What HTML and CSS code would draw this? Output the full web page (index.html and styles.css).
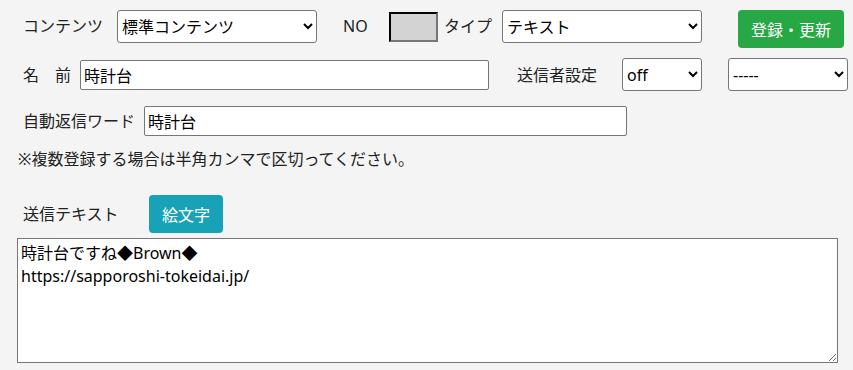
FILE: index.html
```html
<!DOCTYPE html>
<html lang="ja">
<head>
    <meta charset="UTF-8">
    <meta name="viewport" content="width=device-width, initial-scale=1.0">
    <title>コンテンツ編集</title>
    <link rel="stylesheet" href="styles.css">
</head>
<body>
    <form class="edit-form">
        <div class="form-row row-top">
            <label class="form-label label-contents">コンテンツ</label>
            <select class="form-select select-contents">
                <option>標準コンテンツ</option>
            </select>
            <span class="form-label label-no">NO</span>
            <input type="text" class="no-box" disabled>
            <label class="form-label label-type">タイプ</label>
            <select class="form-select select-type">
                <option>テキスト</option>
            </select>
            <button type="button" class="btn btn-save">登録・更新</button>
        </div>

        <div class="form-row row-name">
            <label class="form-label label-name">名　前</label>
            <input type="text" class="form-input input-name" value="時計台">
            <label class="form-label label-sender">送信者設定</label>
            <select class="form-select select-off">
                <option>off</option>
            </select>
            <select class="form-select select-sender">
                <option>-----</option>
            </select>
        </div>

        <div class="form-row row-word">
            <label class="form-label label-word">自動返信ワード</label>
            <input type="text" class="form-input input-word" value="時計台">
        </div>

        <p class="note">※複数登録する場合は半角カンマで区切ってください。</p>

        <div class="form-row row-text">
            <label class="form-label label-text">送信テキスト</label>
            <button type="button" class="btn btn-emoji">絵文字</button>
        </div>

        <textarea class="send-text">時計台ですね◆Brown◆
https://sapporoshi-tokeidai.jp/</textarea>
    </form>
</body>
</html>
```

FILE: styles.css
```css
body {
    margin: 0;
    background: #f4f4f4;
    font-family: "Noto Sans", "Noto Sans CJK JP", sans-serif;
    font-size: 16px;
    color: #222;
}
.edit-form {
    padding: 10px 0 0 0;
    width: 853px;
}
.form-row {
    display: flex;
    align-items: center;
}
.form-label {
    white-space: nowrap;
    line-height: 20px;
}
.form-select {
    font-family: "Noto Sans", "Noto Sans CJK JP", sans-serif;
    font-size: 16px;
    color: #000;
    background: #fff;
    border: 1px solid #767676;
    border-radius: 3px;
    height: 33px;
    padding: 0;
    box-sizing: border-box;
}
.form-input {
    font-family: "Noto Sans", "Noto Sans CJK JP", sans-serif;
    font-size: 16px;
    color: #000;
    background: #fff;
    border: 1px solid #767676;
    border-radius: 2px;
    height: 30px;
    padding: 0 3px;
    box-sizing: border-box;
}
.btn {
    font-family: "Noto Sans", "Noto Sans CJK JP", sans-serif;
    font-size: 16px;
    color: #fff;
    border: none;
    border-radius: 4px;
    cursor: pointer;
    padding: 0;
}

/* row 1 */
.row-top {
    align-items: flex-start;
    height: 48px;
}
.row-top .form-label {
    line-height: 33px;
}
.label-contents {
    margin-left: 23px;
    width: 94px;
}
.select-contents {
    width: 200px;
}
.label-no {
    margin-left: 26px;
    width: 46px;
}
.no-box {
    width: 49px;
    height: 30px;
    margin-top: 2px;
    box-sizing: border-box;
    border: 2px inset #767676;
    border-top-color: #222;
    border-left-color: #222;
    background: #d3d3d3;
    padding: 0;
}
.label-type {
    margin-left: 6px;
    width: 58px;
}
.select-type {
    width: 200px;
}
.btn-save {
    margin-left: 36px;
    width: 106px;
    height: 38px;
    background: #28a745;
}

/* row 2 */
.row-name {
    height: 33px;
}
.label-name {
    margin-left: 23px;
    width: 57px;
}
.input-name {
    width: 409px;
}
.label-sender {
    margin-left: 28px;
    width: 105px;
}
.select-off {
    width: 80px;
}
.select-sender {
    margin-left: 26px;
    width: 120px;
}

/* row 3 */
.row-word {
    margin-top: 15px;
    height: 30px;
}
.label-word {
    margin-left: 23px;
    width: 121px;
}
.input-word {
    width: 483px;
}

.note {
    margin: 12px 0 0 18px;
    line-height: 22px;
}

/* row 5 */
.row-text {
    margin-top: 25px;
    height: 38px;
}
.label-text {
    margin-left: 23px;
    width: 126px;
}
.btn-emoji {
    width: 74px;
    height: 38px;
    background: #17a2b8;
}

.send-text {
    display: block;
    margin: 5px 0 0 17px;
    width: 821px;
    height: 125px;
    box-sizing: border-box;
    border: 1px solid #767676;
    background: #fff;
    font-family: "Noto Sans", "Noto Sans CJK JP", sans-serif;
    font-size: 16px;
    line-height: 23px;
    color: #000;
    padding: 3px 3px;
}
```
